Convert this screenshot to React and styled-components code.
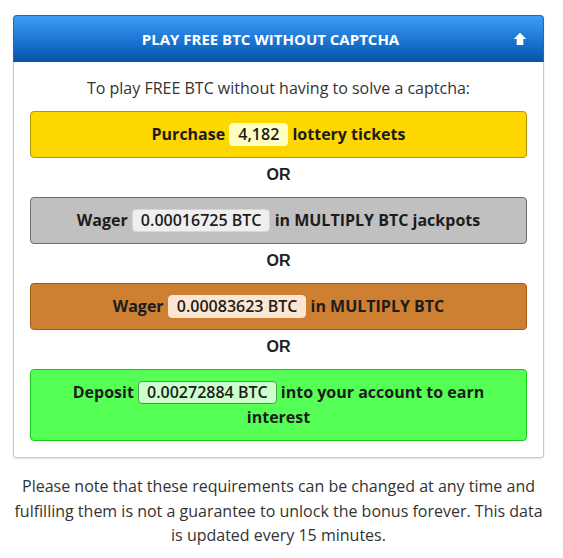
import styled, { createGlobalStyle } from "styled-components";

const GlobalStyle = createGlobalStyle`
    body {
        margin: 0;
        background: #ffffff;
        font-family: "Open Sans", "Liberation Sans", sans-serif;
        color: #333333;
    }
`;

const tiers = [
    { kind: "gold", before: "Purchase", amount: "4,182", after: "lottery tickets" },
    { kind: "silver", before: "Wager", amount: "0.00016725 BTC", after: "in MULTIPLY BTC jackpots" },
    { kind: "bronze", before: "Wager", amount: "0.00083623 BTC", after: "in MULTIPLY BTC" },
    { kind: "green", before: "Deposit", amount: "0.00272884 BTC", after: "into your account to earn interest" },
];

const palette = {
    gold: { bg: "#ffd700", border: "#b39700", badge: "#ffffc2", badgeBorder: "#ffffc2" },
    silver: { bg: "#c0c0c0", border: "#6f6f6f", badge: "#efefef", badgeBorder: "#d6d6d6" },
    bronze: { bg: "#cd7f32", border: "#a65a0e", badge: "#fde6d1", badgeBorder: "#fde6d1" },
    green: { bg: "#55ff55", border: "#14c814", badge: "#ccffcc", badgeBorder: "#3da93d" },
};

function ArrowUp() {
    return (
        <svg width="14" height="14" viewBox="0 0 14 14">
            <path d="M7 0.8 L13.2 7 L10.3 7 L10.3 13 L3.7 13 L3.7 7 L0.8 7 Z" fill="#ffffff" />
        </svg>
    );
}

function App() {
    return (
        <Page>
            <GlobalStyle />
            <Panel>
                <Header>
                    <Title>PLAY FREE BTC WITHOUT CAPTCHA</Title>
                    <Toggle>
                        <ArrowUp />
                    </Toggle>
                </Header>
                <Body>
                    <Intro>To play FREE BTC without having to solve a captcha:</Intro>
                    {tiers.map((t, i) => (
                        <div key={i}>
                            {i > 0 && <Or>OR</Or>}
                            <Tier $kind={t.kind}>
                                {t.before} <Badge $kind={t.kind}>{t.amount}</Badge> {t.after}
                            </Tier>
                        </div>
                    ))}
                </Body>
            </Panel>
            <Note>
                Please note that these requirements can be changed at any time and fulfilling them is
                not a guarantee to unlock the bonus forever. This data is updated every 15 minutes.
            </Note>
        </Page>
    );
}

export default App;

const Page = styled.div`
    width: 531px;
    margin-left: 13px;
    padding-top: 15px;
`;
const Panel = styled.div`
    border-radius: 4px;
    box-shadow: 0 1px 2px rgba(0, 0, 0, 0.12);
`;
const Header = styled.div`
    position: relative;
    height: 46px;
    display: flex;
    align-items: center;
    justify-content: center;
    padding-right: 16px;
    border: 1px solid #1a6ac4;
    border-bottom: none;
    border-radius: 4px 4px 0 0;
    background: linear-gradient(to bottom, #3c9cf6 0%, #1b74d2 55%, #0553a6 100%);
`;
const Title = styled.div`
    color: #ffffff;
    font-weight: 700;
    font-size: 15px;
`;
const Toggle = styled.div`
    position: absolute;
    right: 16px;
    top: 16px;
    display: flex;
`;
const Body = styled.div`
    border: 1px solid #c8c8c8;
    border-top: none;
    border-radius: 0 0 3px 3px;
    padding: 14px 16px 16px;
`;
const Intro = styled.div`
    text-align: center;
    font-size: 16px;
    line-height: 24px;
    color: #333333;
    margin-bottom: 11px;
`;
const Tier = styled.div`
    background: ${(p) => palette[p.$kind].bg};
    border: 1px solid ${(p) => palette[p.$kind].border};
    border-radius: 4px;
    padding: 10px 20px;
    text-align: center;
    font-weight: 700;
    font-size: 16px;
    line-height: 25px;
    color: #1c1c1c;
`;
const Badge = styled.span`
    display: inline-block;
    background: ${(p) => palette[p.$kind].badge};
    border: 1px solid ${(p) => palette[p.$kind].badgeBorder};
    border-radius: 4px;
    padding: 0 8px;
    line-height: 21px;
    font-weight: 600;
`;
const Or = styled.div`
    text-align: center;
    font-family: "Liberation Sans", Arial, sans-serif;
    font-weight: 700;
    font-size: 16px;
    line-height: 22px;
    padding: 6px 0 11px;
    color: #222222;
`;
const Note = styled.p`
    margin: 16px 0 0;
    text-align: center;
    font-size: 16px;
    line-height: 24.5px;
    color: #333333;
`;
